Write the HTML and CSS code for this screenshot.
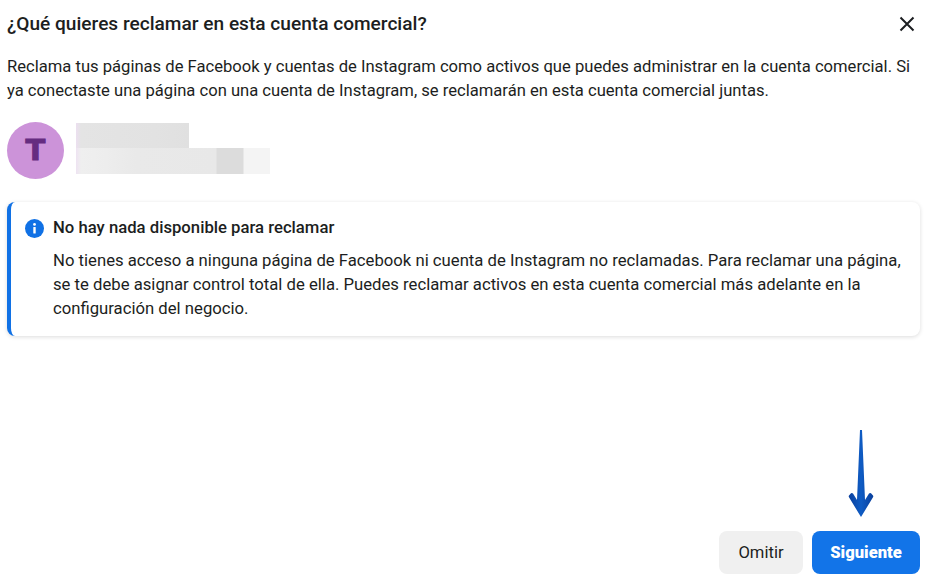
FILE: index.html
```html
<!DOCTYPE html>
<html lang="es">
<head>
    <meta charset="UTF-8">
    <title>Reclamar activos</title>
    <link rel="stylesheet" href="styles.css">
</head>
<body>
    <div class="dialog">
        <div class="header">
            <h1>¿Qué quieres reclamar en esta cuenta comercial?</h1>
            <button class="close" aria-label="Cerrar">
                <svg width="16" height="16" viewBox="0 0 16 16"><path d="M1.5 1.5l13 13M14.5 1.5l-13 13" stroke="#1c1e21" stroke-width="2" fill="none"/></svg>
            </button>
        </div>
        <p class="intro">Reclama tus páginas de Facebook y cuentas de Instagram como activos que puedes administrar en la cuenta comercial. Si ya conectaste una página con una cuenta de Instagram, se reclamarán en esta cuenta comercial juntas.</p>
        <div class="account">
            <div class="avatar">T</div>
            <div class="account-info">
                <div class="blur-name"></div>
                <div class="blur-sub"></div>
            </div>
        </div>
        <div class="notice">
            <div class="notice-title">
                <svg class="info" width="19" height="19" viewBox="0 0 19 19"><circle cx="9.5" cy="9.5" r="9.5" fill="#1071e5"/><circle cx="9.5" cy="5.4" r="1.4" fill="#fff"/><rect x="8.3" y="8" width="2.4" height="6.6" rx="0.5" fill="#fff"/></svg>
                <span>No hay nada disponible para reclamar</span>
            </div>
            <p>No tienes acceso a ninguna página de Facebook ni cuenta de Instagram no reclamadas. Para reclamar una página, se te debe asignar control total de ella. Puedes reclamar activos en esta cuenta comercial más adelante en la configuración del negocio.</p>
        </div>
        <div class="footer">
            <button class="btn btn-skip">Omitir</button>
            <button class="btn btn-next">Siguiente</button>
            <svg class="arrow" width="26" height="88" viewBox="0 0 26 88">
                <defs>
                    <linearGradient id="arrowFill" x1="0" y1="0" x2="1" y2="0">
                        <stop offset="0" stop-color="#0a3f9c"/>
                        <stop offset="0.5" stop-color="#0f5cc4"/>
                        <stop offset="1" stop-color="#0a3f9c"/>
                    </linearGradient>
                </defs>
                <path d="M12 0h2l3 70 4-6.500q1-1 2-.2l2 2.200q.6.800 0 1.800L13 87 1 67.300q-.6-1 0-1.800l2-2.200q1-.8 2 .2l4 6.500z" fill="url(#arrowFill)"/>
            </svg>
        </div>
    </div>
</body>
</html>
```

FILE: styles.css
```css
body {
    font-family: Roboto, "Liberation Sans", sans-serif;
    background-color: #ffffff;
    color: #1c1e21;
    margin: 0;
    padding: 0;
}
.dialog {
    width: 940px;
    height: 580px;
    box-sizing: border-box;
    padding: 12px 20px 6px 7px;
    display: flex;
    flex-direction: column;
}
.header {
    display: flex;
    align-items: center;
    justify-content: space-between;
    height: 24px;
}
h1 {
    font-size: 19.1px;
    font-weight: 500;
    line-height: 24px;
    margin: 0;
}
.close {
    background: none;
    border: none;
    padding: 0;
    width: 16px;
    height: 16px;
    margin-right: 5px;
}
.intro {
    font-size: 16.6px;
    line-height: 24px;
    margin: 19px 0 0;
    color: #1c1e21;
}
.account {
    display: flex;
    align-items: flex-start;
    gap: 12px;
    margin-top: 19px;
}
.avatar {
    width: 57px;
    height: 57px;
    border-radius: 50%;
    background: #cc93d9;
    color: #652c80;
    font-family: "DejaVu Sans", sans-serif;
    font-size: 29px;
    font-weight: 700;
    line-height: 57px;
    text-align: center;
    -webkit-text-stroke: 1px #652c80;
}
.account-info {
    margin-top: 1px;
}
.blur-name {
    width: 113px;
    height: 25px;
    background: linear-gradient(90deg, #ecdff0 0, #e4e4e4 5px, #e2e2e2 70%, #e0e0e0 100%);
}
.blur-sub {
    width: 194px;
    height: 26px;
    background: linear-gradient(90deg, #eee3f2 0, #efefef 5px, #ededed 30px, #e9e9e9 60px, #e8e8e8 140px, #dcdcdc 141px, #dcdcdc 167px, #f4f4f4 168px);
}
.notice {
    margin-top: 23px;
    background: #ffffff;
    border-left: 4px solid #1071e5;
    border-radius: 8px;
    box-shadow: 0 1px 4px rgba(0, 0, 0, 0.14);
    padding: 14px 16px 15px 14px;
}
.notice-title {
    display: flex;
    align-items: center;
    gap: 9px;
    font-size: 16.7px;
    font-weight: 500;
    line-height: 24px;
}
.notice p {
    font-size: 16.7px;
    line-height: 24px;
    margin: 9px 0 0 28px;
}
.footer {
    margin-top: auto;
    position: relative;
    display: flex;
    justify-content: flex-end;
    gap: 9px;
}
.btn {
    font-family: Roboto, "Liberation Sans", sans-serif;
    font-size: 16.6px;
    height: 43px;
    border: none;
    border-radius: 8px;
}
.btn-skip {
    width: 84px;
    background: #f0f0f0;
    color: #1c1e21;
}
.btn-next {
    width: 108px;
    background: #1274e8;
    color: #ffffff;
    font-weight: 900;
}
.arrow {
    position: absolute;
    right: 46px;
    bottom: 56px;
}
```
